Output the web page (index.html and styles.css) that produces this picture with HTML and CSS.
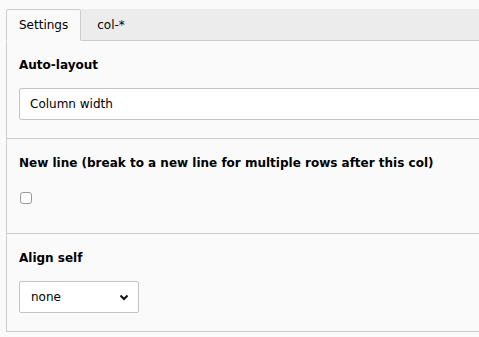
FILE: index.html
```html
<!DOCTYPE html>
<html lang="en">

<head>
    <meta charset="UTF-8">
    <title>Column settings</title>
    <link rel="stylesheet" href="styles.css">
</head>

<body>

    <nav class="tabs">
        <a class="tab active" href="#">Settings</a>
        <a class="tab" href="#">col-*</a>
        <span class="tab-fill"></span>
    </nav>

    <div class="panel">
        <div class="field">
            <label class="field-label">Auto-layout</label>
            <input class="text-input" type="text" value="Column width">
        </div>

        <div class="field">
            <label class="field-label">New line (break to a new line for multiple rows after this col)</label>
            <div class="check-row">
                <span class="check-box"></span>
            </div>
        </div>

        <div class="field">
            <label class="field-label">Align self</label>
            <div class="select-box">
                <span>none</span>
                <svg class="chevron" width="10" height="7" viewBox="0 0 10 7">
                    <path d="M1.5 1.5 L5 5 L8.5 1.5" fill="none" stroke="#111" stroke-width="2"/>
                </svg>
            </div>
        </div>
    </div>

</body>

</html>
```

FILE: styles.css
```css
body {
    margin: 0;
    padding: 9px 0 0 6px;
    background-color: #fafafa;
    font-family: "DejaVu Sans", Verdana, sans-serif;
    font-size: 12px;
    color: #000;
}

.tabs {
    display: flex;
    height: 32px;
}

.tab {
    display: flex;
    align-items: center;
    padding: 0 16px;
    text-decoration: none;
    color: #000;
    background-color: #ececec;
    border-bottom: 1px solid #ccc;
}

.tab.active {
    padding: 0 12px;
    background-color: #fafafa;
    border: 1px solid #ccc;
    border-bottom-color: #fafafa;
    border-radius: 2px 2px 0 0;
}

.tab-fill {
    flex: 1;
    background-color: #ececec;
    border-bottom: 1px solid #ccc;
}

.panel {
    border-left: 1px solid #ccc;
}

.field {
    padding: 16px 0 18px 12px;
    border-bottom: 1px solid #ccc;
}

.field-label {
    display: block;
    font-weight: bold;
    line-height: 16px;
    margin-bottom: 15px;
}

.text-input {
    box-sizing: border-box;
    width: 480px;
    height: 32px;
    padding: 0 10px;
    border: 1px solid #c4c4c4;
    border-radius: 2px;
    background-color: #fff;
    font-family: inherit;
    font-size: 12px;
    color: #000;
}

.check-row {
    height: 29px;
    padding-top: 6px;
    box-sizing: border-box;
}

.check-box {
    display: block;
    width: 10px;
    height: 10px;
    border: 1px solid #999;
    border-radius: 3px;
    background-color: #fff;
    margin-left: 1px;
}

.select-box {
    box-sizing: border-box;
    width: 120px;
    height: 32px;
    padding: 0 9px 0 11px;
    display: flex;
    align-items: center;
    justify-content: space-between;
    border: 1px solid #c4c4c4;
    border-radius: 2px;
    background-color: #fff;
}
```
